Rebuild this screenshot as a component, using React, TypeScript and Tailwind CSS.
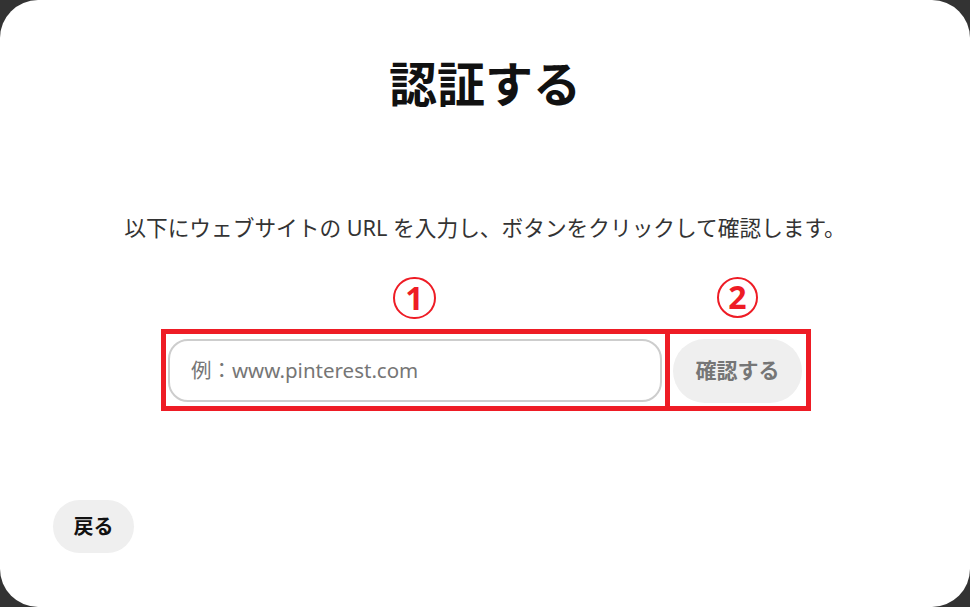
import { useState } from "react";

export default function App() {
  const [url, setUrl] = useState("");

  return (
    <div className="h-[607px] w-full bg-[#333333] font-['Noto_Sans','Noto_Sans_CJK_JP',sans-serif]">
      <div className="flex h-full flex-col rounded-[38px] bg-white">
        <h1 className="mt-[60px] text-center text-[48px] font-bold leading-none text-[#111111]">
          認証する
        </h1>

        <p className="mt-[109px] text-center text-[21.7px] leading-none text-[#333333]">
          以下にウェブサイトの URL を入力し、ボタンをクリックして確認します。
        </p>

        {/* URL form */}
        <div className="relative mx-auto mt-[100px] flex w-[634px] gap-[11px]">
          <input
            value={url}
            onChange={(e) => setUrl(e.target.value)}
            placeholder="例：www.pinterest.com"
            className="h-[63px] w-[494px] rounded-[20px] border-2 border-[#cdcdcd] px-[21px] text-[20.5px] text-[#111111] outline-none placeholder:text-[#767676]"
          />
          <button className="h-[64px] w-[129px] rounded-full bg-[#efefef] text-[21px] font-bold text-[#767676]">
            確認する
          </button>

          {/* annotations */}
          <div className="pointer-events-none absolute left-[-7px] top-[-10px] h-[82px] w-[509px] border-[5px] border-[#ee1c25]" />
          <div className="pointer-events-none absolute left-[497px] top-[-10px] h-[82px] w-[146px] border-[5px] border-[#ee1c25]" />
          <div className="pointer-events-none absolute left-[225px] top-[-62px] flex h-[42px] w-[43px] items-center justify-center rounded-full border-2 border-[#ee1c25] text-[32px] font-bold leading-none text-[#ee1c25]">
            1
          </div>
          <div className="pointer-events-none absolute left-[549px] top-[-62px] flex h-[41px] w-[41px] items-center justify-center rounded-full border-2 border-[#ee1c25] text-[32px] font-bold leading-none text-[#ee1c25]">
            2
          </div>
        </div>

        <div className="mt-auto pb-[54px] pl-[53px]">
          <button className="h-[53px] w-[81px] rounded-full bg-[#efefef] text-[20px] font-bold text-[#111111]">
            戻る
          </button>
        </div>
      </div>
    </div>
  );
}
